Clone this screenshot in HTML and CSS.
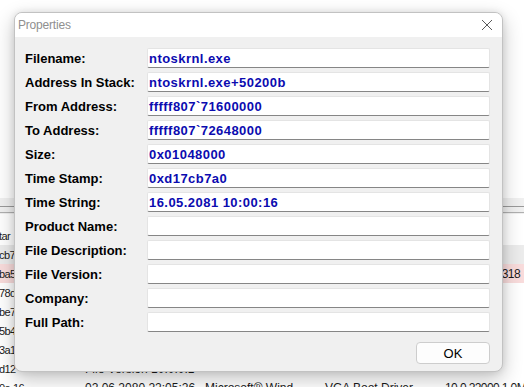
FILE: index.html
```html
<!DOCTYPE html>
<html>
<head>
<meta charset="utf-8">
<link rel="stylesheet" href="styles.css">
</head>
<body>
<div class="app">
  <div class="pane"></div>
  <div class="splitter"><div class="line"></div><div class="line second"></div></div>
  <div class="header"></div>
  <div class="list">
    <div class="row"><span class="c1">tar</span><span class="c2"></span><span class="c3"></span><span class="c4"></span><span class="c5"></span></div>
    <div class="row hover"><span class="c1">cb7</span><span class="c2"></span><span class="c3"></span><span class="c4"></span><span class="c5"></span></div>
    <div class="row pink"><span class="c1">ba5</span><span class="c2"></span><span class="c3"></span><span class="c4"></span><span class="c5">10.0.22000.318</span></div>
    <div class="row"><span class="c1">78d</span><span class="c2"></span><span class="c3"></span><span class="c4"></span><span class="c5"></span></div>
    <div class="row"><span class="c1">be7</span><span class="c2"></span><span class="c3"></span><span class="c4"></span><span class="c5"></span></div>
    <div class="row"><span class="c1">5b4</span><span class="c2"></span><span class="c3"></span><span class="c4"></span><span class="c5"></span></div>
    <div class="row"><span class="c1">3a1</span><span class="c2"></span><span class="c3"></span><span class="c4"></span><span class="c5"></span></div>
    <div class="row"><span class="c1">d12</span><span class="c2">File Version 10.0.0.1</span><span class="c3"></span><span class="c4"></span><span class="c5"></span></div>
    <div class="row"><span class="c1">0e-16</span><span class="c2">02.06.2080 22:05:26</span><span class="c3">Microsoft® Wind</span><span class="c4">VGA Boot Driver</span><span class="c5">10.0.22000.1 0M</span></div>
  </div>
</div>

<div class="dialog">
  <div class="titlebar">
    <span class="title">Properties</span>
    <svg class="close" width="12" height="12" viewBox="0 0 12 12"><path d="M1 1 L11 11 M11 1 L1 11" stroke="#5a5a5a" stroke-width="1" fill="none"/></svg>
  </div>
  <div class="body">
    <div class="grid">
      <span class="label">Filename:</span><div class="field">ntoskrnl.exe</div>
      <span class="label">Address In Stack:</span><div class="field">ntoskrnl.exe+50200b</div>
      <span class="label">From Address:</span><div class="field">fffff807`71600000</div>
      <span class="label">To Address:</span><div class="field">fffff807`72648000</div>
      <span class="label">Size:</span><div class="field">0x01048000</div>
      <span class="label">Time Stamp:</span><div class="field">0xd17cb7a0</div>
      <span class="label">Time String:</span><div class="field">16.05.2081 10:00:16</div>
      <span class="label">Product Name:</span><div class="field"></div>
      <span class="label">File Description:</span><div class="field"></div>
      <span class="label">File Version:</span><div class="field"></div>
      <span class="label">Company:</span><div class="field"></div>
      <span class="label">Full Path:</span><div class="field"></div>
    </div>
    <div class="actions"><button class="ok">OK</button></div>
  </div>
</div>
</body>
</html>
```

FILE: styles.css
```css
* { box-sizing: border-box; }
html, body { margin: 0; padding: 0; }
body {
  width: 524px;
  height: 387px;
  overflow: hidden;
  background: #ffffff;
  font-family: "Liberation Sans", Arial, sans-serif;
  position: relative;
}

.app { width: 524px; }
.pane { height: 198px; background: #ffffff; }
.splitter { height: 16px; background: #f0f0f0; padding-top: 8px; }
.splitter .line { height: 1px; background: #9a9a9a; }
.splitter .line.second { margin-top: 5px; background: #b0b0b0; }
.header { height: 12px; background: #ffffff; }
.list { display: flex; flex-direction: column; }
.row {
  height: 19px;
  display: flex;
  align-items: center;
  font-size: 12px;
  color: #1a1a1a;
  white-space: nowrap;
  overflow: hidden;
}
.row.hover { background: #ececec; }
.row.pink { background: #f9dcdc; }
.c1 { width: 85px; font-size: 11px; letter-spacing: -0.6px; text-indent: -1px; }
.c2 { width: 120px; }
.c3 { width: 120px; }
.c4 { width: 120px; }
.c5 { width: 79px; letter-spacing: -0.6px; }

.dialog {
  position: absolute;
  left: 14px;
  top: 12px;
  width: 489px;
  height: 360px;
  border: 1px solid #c2c2c2;
  border-radius: 8px;
  overflow: hidden;
  display: flex;
  flex-direction: column;
  box-shadow: 0 7px 20px rgba(0,0,0,0.24), 0 0 7px rgba(0,0,0,0.10);
  background: #f0f0f0;
}
.titlebar {
  height: 25px;
  background: #ffffff;
  display: flex;
  align-items: center;
  justify-content: space-between;
  padding: 0 9px 0 3px;
}
.title {
  font-size: 12px;
  color: #8f8f8f;
  letter-spacing: -0.2px;
}
.close { display: block; }
.body {
  flex: 1;
  padding: 11px 12px 7px 10px;
  display: flex;
  flex-direction: column;
}
.grid {
  display: grid;
  grid-template-columns: 122px 343px;
  grid-auto-rows: 20px;
  row-gap: 4px;
}
.label {
  font-weight: bold;
  font-size: 13px;
  color: #000000;
  display: flex;
  align-items: center;
}
.field {
  background: #ffffff;
  border: 1px solid #e4e4e4;
  border-bottom: 1px solid #868686;
  border-radius: 2px;
  padding-left: 1px;
  font-weight: bold;
  font-size: 13px;
  letter-spacing: 0.45px;
  color: #0b0bb0;
  display: flex;
  align-items: center;
  white-space: nowrap;
  overflow: hidden;
}
.actions {
  margin-top: 10px;
  display: flex;
  justify-content: flex-end;
}
.ok {
  width: 74px;
  height: 22px;
  border: 1px solid #cdcdcd;
  border-radius: 4px;
  background: #fdfdfd;
  font-family: "Liberation Sans", Arial, sans-serif;
  font-size: 13px;
  color: #000000;
  padding: 0;
}
```
